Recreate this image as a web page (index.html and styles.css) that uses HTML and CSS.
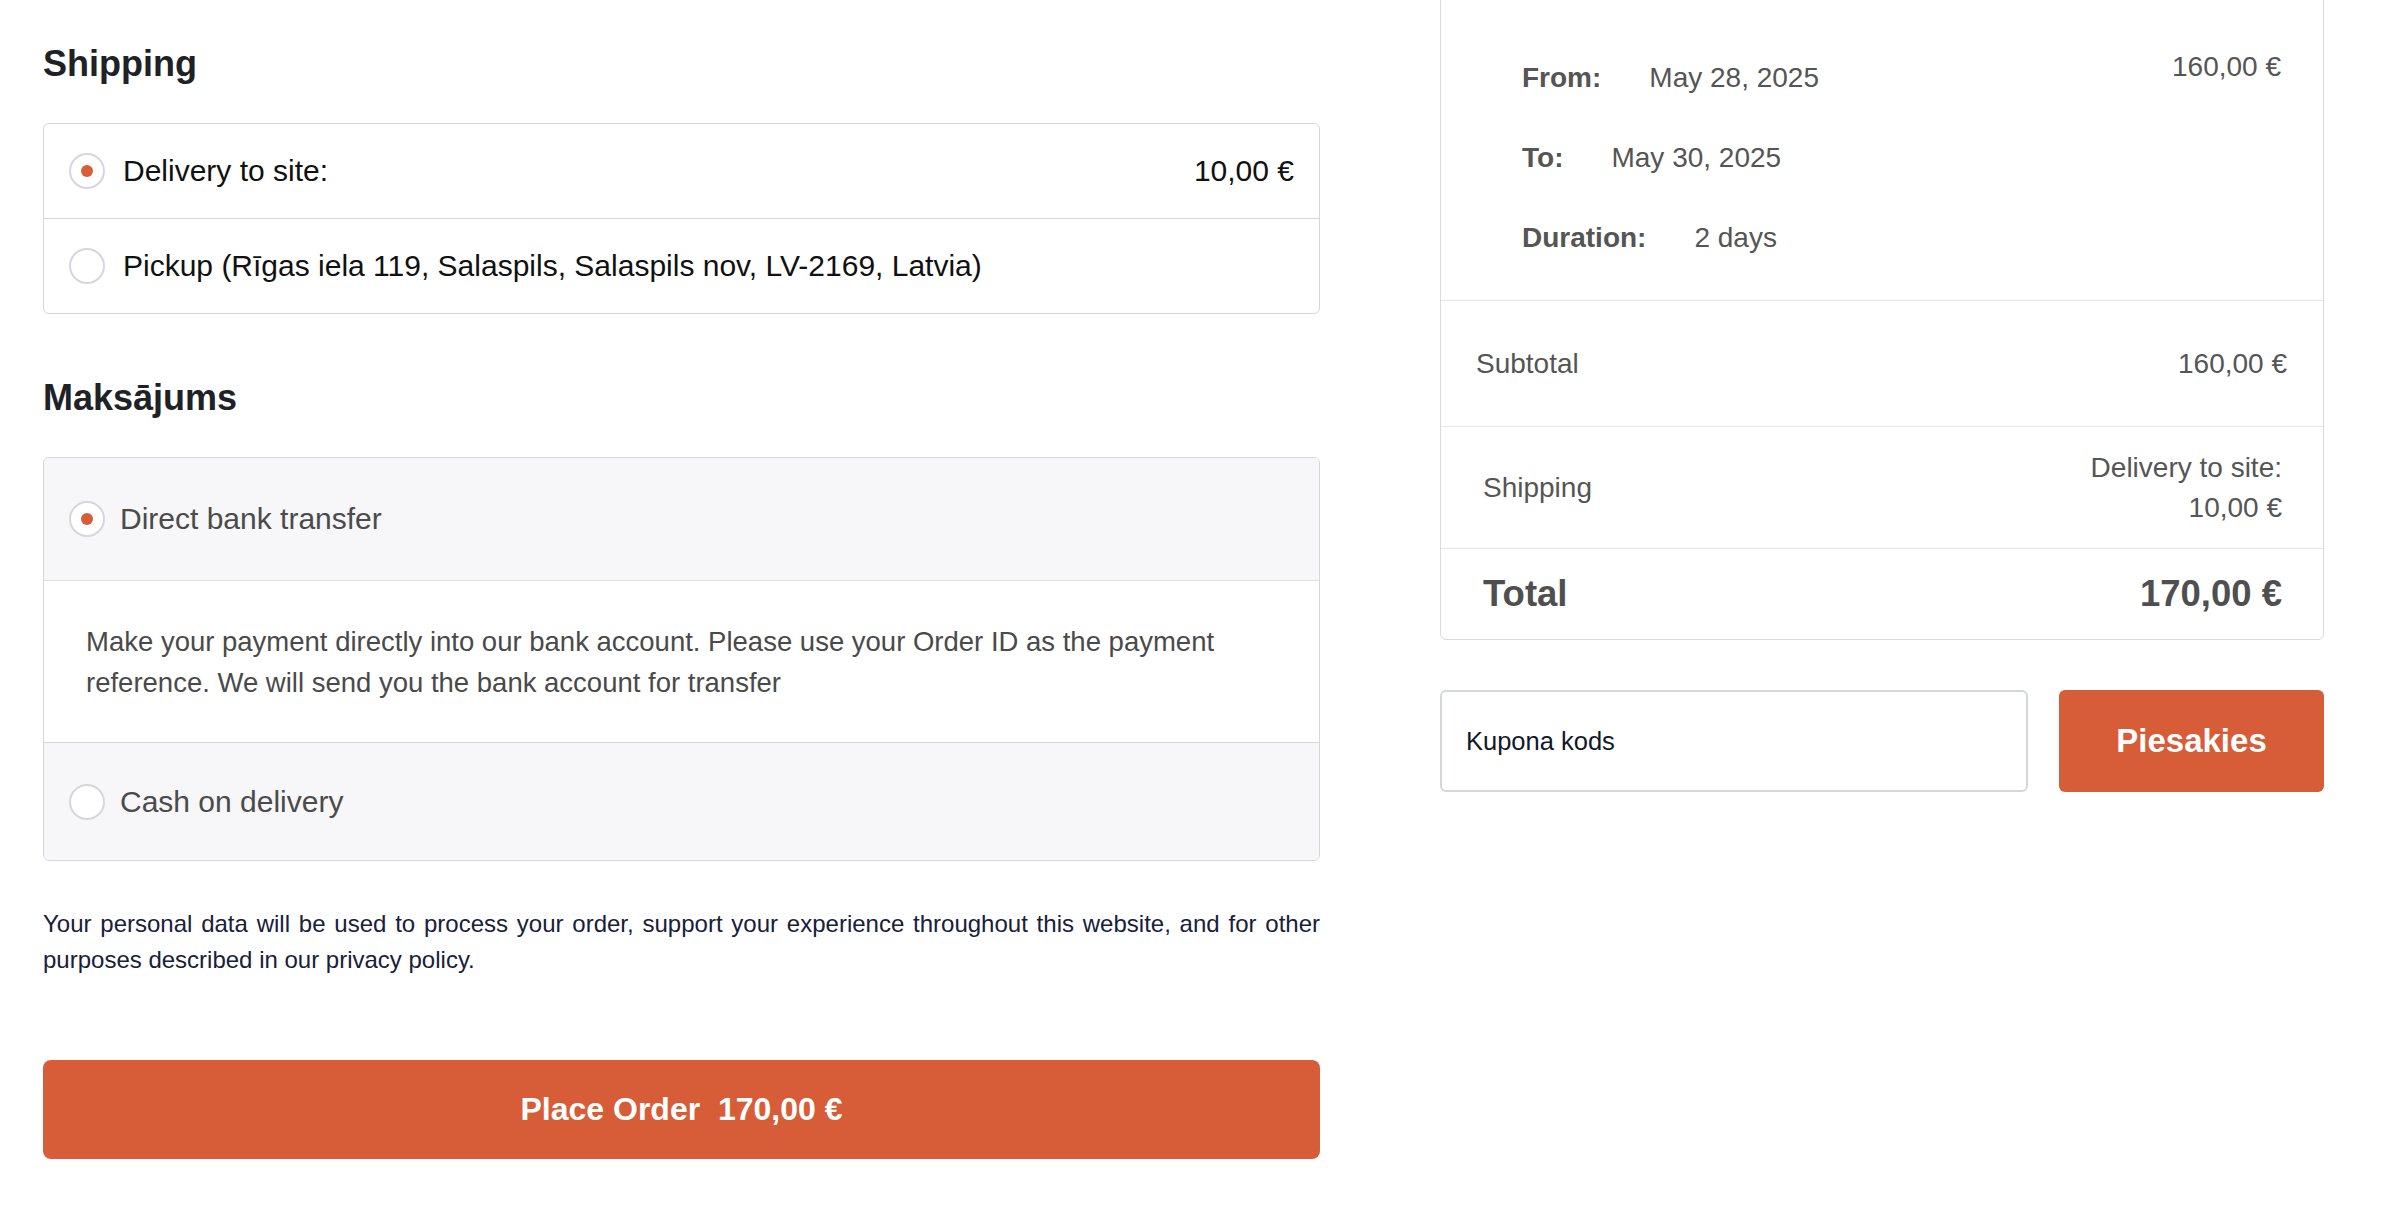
FILE: index.html
```html
<!DOCTYPE html>
<html lang="lv">
<head>
<meta charset="utf-8">
<title>Checkout</title>
<link rel="stylesheet" href="styles.css">
</head>
<body>
<div class="page">
  <main class="checkout">
    <section class="block">
      <h2 class="title">Shipping</h2>
      <div class="options">
        <label class="option">
          <span class="radio checked"></span>
          <span class="option-label">Delivery to site:</span>
          <span class="option-price">10,00 €</span>
        </label>
        <label class="option">
          <span class="radio"></span>
          <span class="option-label">Pickup (Rīgas iela 119, Salaspils, Salaspils nov, LV-2169, Latvia)</span>
        </label>
      </div>
    </section>

    <section class="block block-payment">
      <h2 class="title">Maksājums</h2>
      <div class="payments">
        <label class="pay-head">
          <span class="radio checked"></span>
          <span class="pay-label">Direct bank transfer</span>
        </label>
        <div class="pay-desc">Make your payment directly into our bank account. Please use your Order ID as the payment reference. We will send you the bank account for transfer</div>
        <label class="pay-head pay-last">
          <span class="radio"></span>
          <span class="pay-label">Cash on delivery</span>
        </label>
      </div>
    </section>

    <p class="privacy">Your personal data will be used to process your order, support your experience throughout this website, and for other purposes described in our privacy policy.</p>

    <button class="place-order" type="button">Place Order&nbsp; 170,00 €</button>
  </main>

  <aside class="summary">
    <div class="card">
      <div class="item">
        <dl class="dates">
          <div class="date-row"><dt>From:</dt><dd>May 28, 2025</dd></div>
          <div class="date-row"><dt>To:</dt><dd>May 30, 2025</dd></div>
          <div class="date-row"><dt>Duration:</dt><dd>2 days</dd></div>
        </dl>
        <div class="item-price">160,00 €</div>
      </div>
      <div class="row row-subtotal">
        <span>Subtotal</span>
        <span>160,00 €</span>
      </div>
      <div class="row row-shipping">
        <span>Shipping</span>
        <span class="ship-value">Delivery to site:<br>10,00 €</span>
      </div>
      <div class="row row-total">
        <span>Total</span>
        <span>170,00 €</span>
      </div>
    </div>

    <div class="coupon">
      <input class="coupon-input" type="text" placeholder="Kupona kods">
      <button class="coupon-btn" type="button">Piesakies</button>
    </div>
  </aside>
</div>
</body>
</html>
```

FILE: styles.css
```css
* {
  box-sizing: border-box;
}

html, body {
  margin: 0;
  padding: 0;
  background: #ffffff;
}

body {
  font-family: "Liberation Sans", Arial, Helvetica, sans-serif;
  color: #111111;
  overflow: hidden;
}

.page {
  display: flex;
  align-items: flex-start;
  gap: 120px;
  padding-left: 43px;
}

/* ---------- left column ---------- */

.checkout {
  width: 1277px;
  flex: none;
  padding-top: 42px;
}

.title {
  margin: 0 0 37px;
  font-size: 36px;
  line-height: 44px;
  font-weight: 700;
  color: #1e2227;
}

.block-payment {
  margin-top: 62px;
}

.options,
.payments {
  border: 1px solid #d5d5da;
  border-radius: 6px;
  overflow: hidden;
}

.option {
  display: flex;
  align-items: center;
  height: 94px;
  padding: 0 25px;
  font-size: 30px;
  color: #111111;
}

.option + .option {
  height: 95px;
  border-top: 1px solid #d5d5da;
}

.option-label {
  margin-left: 18px;
  flex: 1;
}

.option-price {
  white-space: nowrap;
}

.radio {
  flex: none;
  width: 36px;
  height: 36px;
  border-radius: 50%;
  border: 2px solid #d6d7dc;
  background: #ffffff;
  display: flex;
  align-items: center;
  justify-content: center;
}

.radio.checked::after {
  content: "";
  width: 12px;
  height: 12px;
  border-radius: 50%;
  background: #d65d37;
}

.pay-head {
  display: flex;
  align-items: center;
  height: 122px;
  padding: 0 25px;
  background: #f7f6f8;
  font-size: 30px;
  color: #4b4b4b;
}

.pay-label {
  margin-left: 15px;
}

.pay-desc {
  border-top: 1px solid #dedee3;
  padding: 40px 42px 39px;
  background: #ffffff;
  font-size: 27.5px;
  line-height: 41px;
  color: #4a4a4a;
}

.pay-last {
  height: 118px;
  border-top: 1px solid #d5d5da;
}

.privacy {
  margin: 45px 0 0;
  font-size: 24px;
  line-height: 36px;
  text-align: justify;
  color: #18203a;
}

.place-order {
  display: block;
  width: 100%;
  height: 99px;
  margin-top: 82px;
  border: none;
  border-radius: 8px;
  background: #d65d37;
  color: #ffffff;
  font-family: inherit;
  font-size: 32px;
  font-weight: 700;
  cursor: pointer;
}

/* ---------- right column ---------- */

.summary {
  width: 884px;
  flex: none;
  margin-top: -20px;
}

.card {
  border: 1px solid #dadade;
  border-radius: 6px;
  color: #555555;
  font-size: 28px;
}

.item {
  display: flex;
  justify-content: space-between;
  align-items: flex-start;
  padding: 57px 42px 22px 81px;
  border-bottom: 1px solid #e5e5ea;
}

.dates {
  margin: 0;
}

.date-row {
  display: flex;
  gap: 48px;
  line-height: 80px;
}

.date-row dt {
  font-weight: 700;
}

.date-row dd {
  margin: 0;
}

.item-price {
  line-height: 58px;
}

.row {
  display: flex;
  justify-content: space-between;
  align-items: center;
  border-bottom: 1px solid #e5e5ea;
}

.row-subtotal {
  height: 126px;
  padding: 0 36px 0 35px;
}

.row-shipping {
  height: 122px;
  padding: 0 41px 0 42px;
}

.ship-value {
  text-align: right;
  line-height: 40px;
}

.row-total {
  height: 90px;
  padding: 0 41px 0 42px;
  border-bottom: none;
  font-size: 36.5px;
  font-weight: 700;
  color: #4f4f4f;
}

.coupon {
  display: flex;
  gap: 31px;
  margin-top: 50px;
  height: 102px;
}

.coupon-input {
  flex: 1;
  min-width: 0;
  height: 100%;
  border: 2px solid #d4d7dd;
  border-radius: 6px;
  padding: 0 24px;
  font-family: inherit;
  font-size: 25.5px;
  color: #111827;
  background: #ffffff;
  outline: none;
}

.coupon-input::placeholder {
  color: #111827;
  opacity: 1;
}

.coupon-btn {
  flex: none;
  width: 265px;
  height: 100%;
  border: none;
  border-radius: 6px;
  background: #d65d37;
  color: #ffffff;
  font-family: inherit;
  font-size: 33px;
  font-weight: 700;
  cursor: pointer;
}
```
